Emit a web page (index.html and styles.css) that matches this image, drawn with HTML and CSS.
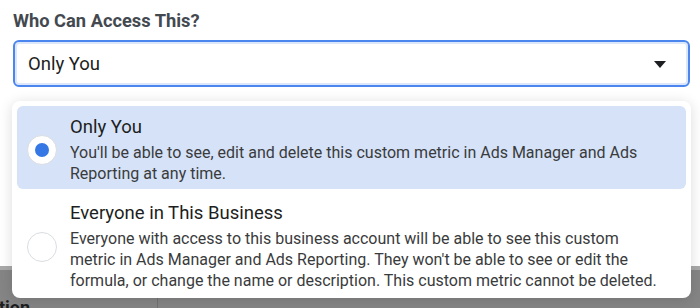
FILE: index.html
```html
<!DOCTYPE html>
<html lang="en">
<head>
    <meta charset="UTF-8">
    <title>Who Can Access This?</title>
    <link rel="stylesheet" href="styles.css">
</head>
<body>
    <div class="field">
        <label class="field-label">Who Can Access This?</label>
        <div class="select">
            <span>Only You</span>
            <svg class="caret" width="12" height="7" viewBox="0 0 12 7"><path d="M0 0h12L6 7z" fill="#1c1e21"/></svg>
        </div>

        <ul class="menu">
            <li class="option selected">
                <span class="radio"></span>
                <div class="option-text">
                    <div class="option-title">Only You</div>
                    <div class="option-desc">You'll be able to see, edit and delete this custom metric in Ads Manager and Ads Reporting at any time.</div>
                </div>
            </li>
            <li class="option">
                <span class="radio"></span>
                <div class="option-text">
                    <div class="option-title">Everyone in This Business</div>
                    <div class="option-desc">Everyone with access to this business account will be able to see this custom metric in Ads Manager and Ads Reporting. They won't be able to see or edit the formula, or change the name or description. This custom metric cannot be deleted.</div>
                </div>
            </li>
        </ul>
    </div>

    <div class="below">
        <div class="below-top"></div>
        <div class="below-row">
            <div class="below-cell"><span class="below-title">tion</span></div>
            <div class="below-cell"></div>
        </div>
    </div>
</body>
</html>
```

FILE: styles.css
```css
body {
    margin: 0;
    font-family: Roboto, 'Liberation Sans', sans-serif;
    background-color: #ffffff;
    color: #1c1e21;
    width: 700px;
    height: 308px;
    overflow: hidden;
}
.field {
    position: relative;
    padding: 10px 10px 0 13px;
    height: 256px;
}
.field-label {
    display: block;
    font-size: 18.3px;
    font-weight: bold;
    color: #444950;
    line-height: 22px;
    margin-bottom: 8px;
}
.select {
    height: 43px;
    border: 2px solid #4a86ee;
    border-radius: 6px;
    box-shadow: inset 0 0 0 2px #dde7fb;
    display: flex;
    align-items: center;
    justify-content: space-between;
    padding: 0 22px 0 13px;
    font-size: 18.5px;
}
.caret {
    margin-top: 1px;
}
.menu {
    position: absolute;
    left: 12px;
    right: 9px;
    top: 101px;
    list-style: none;
    margin: 0;
    padding: 5px;
    background-color: #ffffff;
    border-radius: 8px;
    box-shadow: 0 2px 14px rgba(0, 0, 0, 0.14);
    z-index: 2;
}
.option {
    display: flex;
    align-items: center;
    padding: 10px 10px 5px;
    border-radius: 6px;
}
.option.selected {
    background-color: #d5e2f8;
}
.option + .option {
    padding-top: 13px;
    padding-bottom: 2px;
}
.radio {
    flex: none;
    width: 30px;
    height: 30px;
    border-radius: 50%;
    background-color: #ffffff;
    border: 1px solid #dadde1;
    box-sizing: border-box;
    margin-right: 13px;
    position: relative;
}
.selected .radio::after {
    content: '';
    position: absolute;
    left: 7px;
    top: 7px;
    width: 14px;
    height: 14px;
    border-radius: 50%;
    background-color: #3578e5;
}
.option-title {
    font-size: 18.5px;
    line-height: 22px;
    color: #1c1e21;
    margin-bottom: 4px;
}
.option-desc {
    max-width: 596px;
    font-size: 16px;
    line-height: 21px;
    color: #3a3b3c;
}
.below {
    background-color: #858585;
    height: 52px;
}
.below-top {
    height: 4px;
    background-color: #a9a9a9;
}
.below-row {
    display: flex;
    height: 48px;
}
.below-cell {
    width: 157px;
    border-right: 1px solid #727272;
}
.below-cell + .below-cell {
    flex: 1;
    border-right: none;
}
.below-title {
    display: block;
    font-size: 18px;
    font-weight: bold;
    color: #1c1e21;
    padding-top: 27px;
    margin-left: -1px;
}
```
